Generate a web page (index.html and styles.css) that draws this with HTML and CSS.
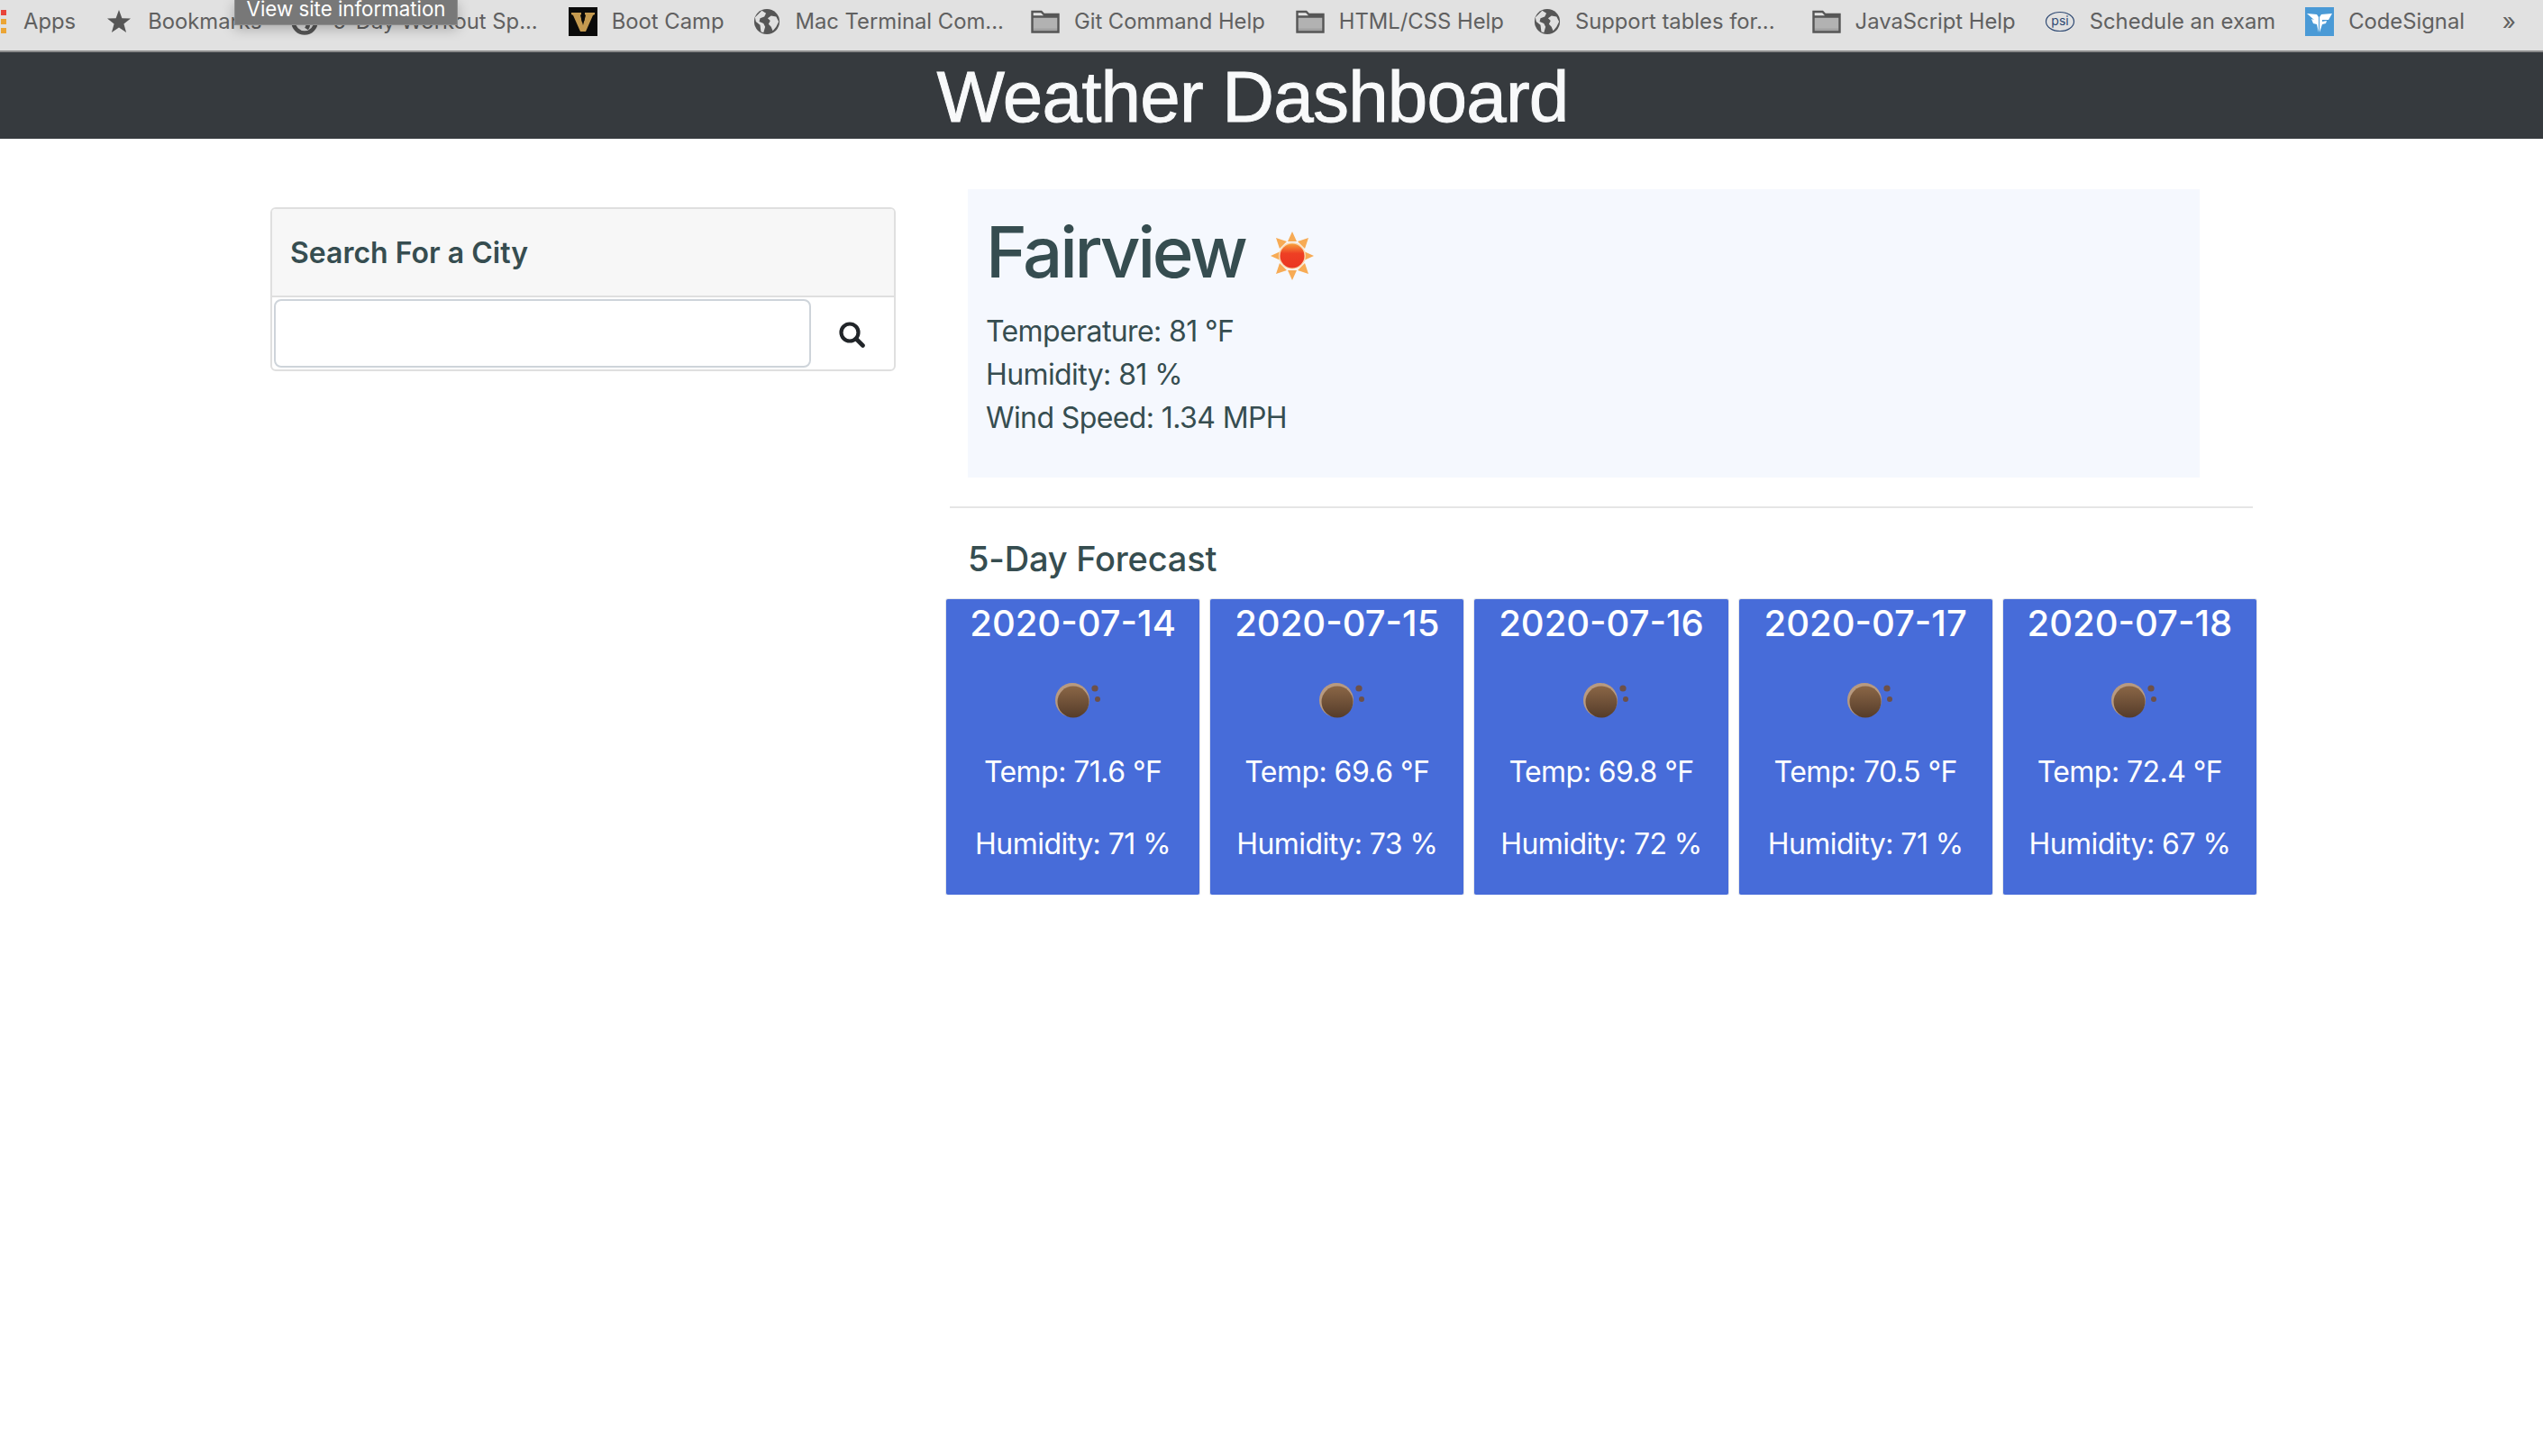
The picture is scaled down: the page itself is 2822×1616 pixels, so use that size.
FILE: index.html
```html
<!DOCTYPE html>
<html lang="en">
<head>
    <meta charset="UTF-8">
    <meta name="viewport" content="width=device-width, initial-scale=1.0">
    <title>Weather Dashboard</title>
    <link rel="stylesheet" href="styles.css">
</head>
<body>

    <svg class="defs" width="0" height="0">
        <symbol id="globe" viewBox="0 0 32 32">
            <circle cx="16" cy="16" r="15" fill="#565656"/>
            <path d="M10 3l5 3-2 4-5 2-1 4 5 2 2 4-2 7-3-1-1-8-5-4-1-5z" fill="#e0e0e0"/>
            <path d="M21 9l6 1 3 6-3 6-4 5-2-5-3-3 2-4-3-3z" fill="#e0e0e0"/>
        </symbol>
        <symbol id="folder" viewBox="0 0 32 26">
            <path d="M1.5 6V2h10l3 3h16v19.5h-29z" fill="#e4e4e4"/>
            <rect x="1.5" y="7.5" width="29" height="17" fill="#b2b2b2"/>
            <rect x="1.5" y="20.5" width="29" height="3" fill="#a2a2a2"/>
            <path d="M1.5 7V2h10l3 3h16v19.5h-29zM1.5 7.5h29" fill="none" stroke="#565656" stroke-width="2.4"/>
        </symbol>
        <symbol id="moon" viewBox="0 0 60 44">
            <defs>
                <linearGradient id="moonFill" x1="0" y1="0" x2="0" y2="1">
                    <stop offset="0" stop-color="#8a6646"/>
                    <stop offset="1" stop-color="#553c2a"/>
                </linearGradient>
            </defs>
            <circle cx="29" cy="22" r="19" fill="#b89a80"/>
            <circle cx="30" cy="24" r="17.5" fill="url(#moonFill)"/>
            <circle cx="54" cy="9" r="3.6" fill="#6d5048"/>
            <circle cx="57" cy="21" r="3" fill="#6d5048"/>
        </symbol>
    </svg>

    <nav class="bookmarks">
        <div class="apps-grid"><span class="dot-red"></span><span class="dot-orange"></span><span class="dot-orange"></span></div>
        <a class="mark mark-apps">Apps</a>
        <a class="mark mark-star">
            <svg class="icon-star" viewBox="0 0 26 26"><path d="M13 0l3.4 9.2 9.6.4-7.6 6 2.7 9.4-8.1-5.4L4.900 25l2.700-9.400-7.600-6 9.600-.4z" fill="#565656"/></svg>
            Bookmarks
        </a>
        <a class="mark">
            <svg class="icon-globe" viewBox="0 0 30 30"><circle cx="15" cy="15" r="12.500" fill="none" stroke="#565656" stroke-width="4.500"/><path d="M15 15c4 1 5 4 2 8" fill="none" stroke="#565656" stroke-width="4.500"/></svg>
            5-Day Workout Sp...
        </a>
        <a class="mark mark-boot">
            <svg class="icon-square" viewBox="0 0 32 32"><rect width="32" height="32" fill="#0a0a0a"/><path d="M3 6h11v2l-1 1 3 11 3-11-1-1V6h11v2l-2 1-8 18h-6L5 9 3 8z" fill="#c49a50"/><path d="M15 7l3 2-2 3 2 2-3 3-1-4 1-2z" fill="#0a0a0a"/></svg>
            Boot Camp
        </a>
        <a class="mark"><svg class="icon-globe"><use href="#globe"/></svg>Mac Terminal Com...</a>
        <a class="mark mark-git"><svg class="icon-folder"><use href="#folder"/></svg>Git Command Help</a>
        <a class="mark mark-html"><svg class="icon-folder"><use href="#folder"/></svg>HTML/CSS Help</a>
        <a class="mark"><svg class="icon-globe"><use href="#globe"/></svg>Support tables for...</a>
        <a class="mark mark-js"><svg class="icon-folder"><use href="#folder"/></svg>JavaScript Help</a>
        <a class="mark mark-psi">
            <svg class="icon-psi" viewBox="0 0 34 24"><ellipse cx="17" cy="12" rx="15.500" ry="10.500" fill="none" stroke="#2f4a73" stroke-width="1.200"/><text x="17" y="16" text-anchor="middle" class="psi-text">psi</text></svg>
            Schedule an exam
        </a>
        <a class="mark">
            <svg class="icon-square" viewBox="0 0 32 32"><rect width="32" height="32" fill="#4a9ad6"/><path d="M2 7l11 1 2 3v17l-2-9-4-1-2-5 3 1z" fill="#fff"/><path d="M30 7l-12 1-2 3v17l3-9 4-1 1-3-5 1v-2h7z" fill="#fff"/></svg>
            CodeSignal
        </a>
        <span class="more">»</span>
        <div class="site-tip">View site information</div>
    </nav>

    <header class="page-title">
        <h1>Weather Dashboard</h1>
    </header>

    <main class="content">
        <aside class="search-col">
            <section class="search-card">
                <h2 class="search-head">Search For a City</h2>
                <div class="search-row">
                    <input class="search-input" type="text">
                    <button class="search-btn" type="button">
                        <svg viewBox="0 0 30 30" class="icon-search"><circle cx="13" cy="13" r="9.500" fill="none" stroke="#212529" stroke-width="4.200"/><path d="M20 20l7.500 7.500" stroke="#212529" stroke-width="4.600" stroke-linecap="round"/></svg>
                    </button>
                </div>
            </section>
        </aside>

        <section class="weather-col">
            <div class="today">
                <div class="today-head">
                    <h1 class="city">Fairview</h1>
                    <svg class="icon-sun" viewBox="0 0 48 54">
                        <defs>
                            <linearGradient id="sunFill" x1="0" y1="0" x2="0" y2="1">
                                <stop offset="0" stop-color="#f7a03c"/>
                                <stop offset=".4" stop-color="#ee3f24"/>
                                <stop offset="1" stop-color="#ea3522"/>
                            </linearGradient>
                        </defs>
                        <g fill="#f7ab55">
                            <path d="M24 0l5 11H19z"/>
                            <path d="M24 54l-5-11h10z"/>
                            <path d="M0 27l11-5v10z"/>
                            <path d="M48 27l-11 5V22z"/>
                            <path d="M6 7l12 4-8 8z"/>
                            <path d="M42 7l-4 12-8-8z"/>
                            <path d="M6 47l4-12 8 8z"/>
                            <path d="M42 47l-12-4 8-8z"/>
                        </g>
                        <circle cx="24" cy="27" r="15" fill="#fbd9b0"/>
                        <circle cx="24" cy="27" r="13.500" fill="url(#sunFill)"/>
                    </svg>
                </div>
                <p>Temperature: 81 °F</p>
                <p>Humidity: 81 %</p>
                <p>Wind Speed: 1.34 MPH</p>
            </div>

            <hr class="rule">

            <h3 class="forecast-title">5-Day Forecast</h3>
            <div class="forecast">
                <article class="day">
                    <h4>2020-07-14</h4>
                    <svg class="icon-moon"><use href="#moon"/></svg>
                    <p>Temp: 71.6 °F</p>
                    <p>Humidity: 71 %</p>
                </article>
                <article class="day">
                    <h4>2020-07-15</h4>
                    <svg class="icon-moon"><use href="#moon"/></svg>
                    <p>Temp: 69.6 °F</p>
                    <p>Humidity: 73 %</p>
                </article>
                <article class="day">
                    <h4>2020-07-16</h4>
                    <svg class="icon-moon"><use href="#moon"/></svg>
                    <p>Temp: 69.8 °F</p>
                    <p>Humidity: 72 %</p>
                </article>
                <article class="day">
                    <h4>2020-07-17</h4>
                    <svg class="icon-moon"><use href="#moon"/></svg>
                    <p>Temp: 70.5 °F</p>
                    <p>Humidity: 71 %</p>
                </article>
                <article class="day">
                    <h4>2020-07-18</h4>
                    <svg class="icon-moon"><use href="#moon"/></svg>
                    <p>Temp: 72.4 °F</p>
                    <p>Humidity: 67 %</p>
                </article>
            </div>
        </section>
    </main>

</body>
</html>
```

FILE: styles.css
```css
body {
    font-family: Inter, "Noto Sans", sans-serif;
    background-color: #fff;
    color: #364d50;
    margin: 0;
    padding: 0;
    font-size: 32px;
    line-height: 48px;
}

.defs {
    position: absolute;
}

/* browser bookmarks bar */
.bookmarks {
    position: relative;
    display: flex;
    align-items: center;
    height: 48px;
    padding: 0 0 8px 1px;
    background-color: #e1e1e1;
    border-bottom: 2px solid #8c8c8c;
    color: #606060;
    font-size: 23.8px;
    line-height: 32px;
    white-space: nowrap;
    overflow: hidden;
}

.apps-grid {
    display: flex;
    flex-direction: column;
    gap: 4px;
    width: 6px;
}

.apps-grid span {
    display: block;
    width: 6px;
    height: 6px;
}

.dot-red {
    background-color: #e8443a;
}

.dot-orange {
    background-color: #eba535;
}

.mark {
    display: flex;
    align-items: center;
    gap: 16px;
    margin-left: 33px;
}

.mark-apps {
    margin-left: 19px;
}

.mark-star {
    margin-left: 35px;
}

.mark-boot {
    margin-left: 34px;
}

.mark-git {
    margin-left: 30px;
}

.mark-html {
    margin-left: 34px;
}

.mark-js {
    margin-left: 41px;
}

.mark-psi {
    margin-left: 32px;
}

.icon-star {
    width: 26px;
    height: 26px;
    margin-right: 3px;
}

.icon-globe {
    width: 30px;
    height: 30px;
}

.icon-folder {
    width: 32px;
    height: 26px;
}

.icon-square {
    width: 32px;
    height: 32px;
}

.icon-psi {
    width: 34px;
    height: 24px;
}

.psi-text {
    font-size: 14px;
    fill: #2f4a73;
}

.more {
    margin-left: auto;
    margin-right: 30px;
    font-size: 26px;
}

.site-tip {
    position: absolute;
    left: 260px;
    top: 0;
    width: 246px;
    height: 27px;
    background-color: #787878;
    border: 1px solid #8e8e8e;
    border-top: none;
    box-shadow: 0 4px 14px rgba(0, 0, 0, 0.25);
    color: #fff;
    font-size: 22.3px;
    line-height: 20px;
    text-align: center;
}

/* page header */
.page-title {
    box-sizing: border-box;
    background-color: #363a3e;
    height: 96px;
    padding: 4px 42px 0 0;
    text-align: center;
}

.page-title h1 {
    margin: 0;
    color: #f8f9fa;
    font-family: "Liberation Sans", Arial, sans-serif;
    font-size: 80px;
    font-weight: 400;
    letter-spacing: -0.8px;
    line-height: 92px;
    -webkit-text-stroke: 0.9px #f8f9fa;
}

.content {
    display: flex;
    padding-left: 300px;
}

/* search card */
.search-col {
    width: 694px;
    padding-top: 76px;
}

.search-card {
    border: 2px solid #dfdfdf;
    border-radius: 6px;
    overflow: hidden;
}

.search-head {
    margin: 0;
    height: 96px;
    padding-left: 20px;
    background-color: #f7f7f7;
    border-bottom: 2px solid #dfdfdf;
    font-size: 32px;
    font-weight: 600;
    line-height: 98px;
}

.search-row {
    display: flex;
    align-items: center;
    padding: 2px;
}

.search-input {
    width: 596px;
    height: 76px;
    box-sizing: border-box;
    border: 2px solid #ced4da;
    border-radius: 8px;
    background-color: #fff;
}

.search-btn {
    flex: 1;
    display: flex;
    justify-content: center;
    background: none;
    border: none;
    padding: 0;
    cursor: pointer;
}

.icon-search {
    width: 30px;
    height: 30px;
    margin-top: 2px;
}

/* current weather */
.weather-col {
    width: 1446px;
    margin-left: 60px;
    padding-top: 56px;
}

.today {
    margin-left: 20px;
    width: 1367px;
    height: 320px;
    box-sizing: border-box;
    padding: 20px;
    background-color: #f5f8fe;
}

.today p {
    margin: 0;
    letter-spacing: -0.6px;
}

.today-head {
    display: flex;
    align-items: center;
    gap: 28px;
    box-sizing: border-box;
    height: 106px;
    padding-bottom: 6px;
    margin-bottom: 8px;
}

.city {
    margin: 0;
    font-size: 78px;
    font-weight: 500;
    letter-spacing: -3.2px;
    line-height: 96px;
}

.icon-sun {
    width: 48px;
    height: 54px;
    margin-top: 8px;
}

.rule {
    margin: 32px 0 0;
    border: none;
    border-top: 2px solid #e5e5e5;
}

.forecast-title {
    margin: 32px 0 21px 20px;
    font-size: 38px;
    font-weight: 500;
    letter-spacing: -0.2px;
    line-height: 48px;
}

/* forecast cards */
.forecast {
    display: grid;
    grid-template-columns: repeat(5, 1fr);
    gap: 12px;
    width: 1454px;
    margin-left: -4px;
}

.day {
    height: 328px;
    box-sizing: border-box;
    padding-top: 3px;
    border-radius: 2px;
    background-color: #476cd9;
    box-shadow: 0 0 0 1px #e4e6ea;
    color: #fff;
    text-align: center;
}

.day h4 {
    margin: 0;
    font-size: 40px;
    font-weight: 500;
    line-height: 48px;
}

.day p {
    margin: 0 0 32px;
    letter-spacing: -0.55px;
}

.icon-moon {
    display: block;
    width: 60px;
    height: 44px;
    margin: 39px auto 34px;
}
```
